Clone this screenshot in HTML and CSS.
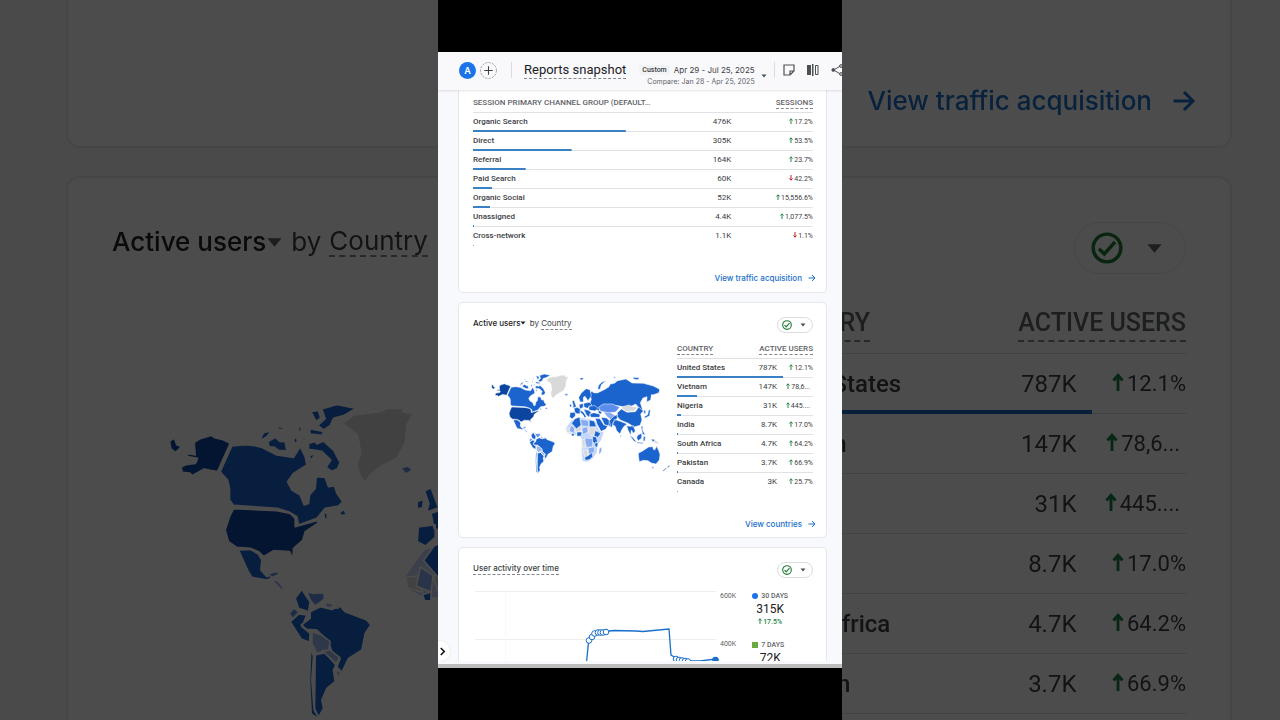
FILE: index.html
```html
<!DOCTYPE html>
<html lang="en">
<head>
<meta charset="utf-8">
<title>Reports snapshot</title>
<link rel="stylesheet" href="styles.css">
</head>
<body>
<svg class="defs" aria-hidden="true">
  <symbol id="arrow" viewBox="0 0 16 16"><path d="M1 8h13M8 2l6 6-6 6" fill="none" stroke="currentColor" stroke-width="2"/></symbol>
  <symbol id="caret" viewBox="0 0 12 12"><path d="M1 3h10L6 9z" fill="currentColor"/></symbol>
  <symbol id="check" viewBox="0 0 24 24"><g fill="none" stroke="#1e7b34" stroke-width="2.6"><circle cx="12" cy="12" r="10.4"/><path d="M6 12.500l4 4 8-9"/></g></symbol>
  <symbol id="up" viewBox="0 0 8 12"><path d="M4 12V2M1 5l3-3.500L7 5" fill="none" stroke="#188045" stroke-width="1.900"/></symbol>
  <symbol id="down" viewBox="0 0 8 12"><path d="M4 0v10M1 7l3 3.500L7 7" fill="none" stroke="#b3142c" stroke-width="1.900"/></symbol>
  <symbol id="world" viewBox="0 0 600 375">
    <g transform="translate(-126 0) scale(.3157)" stroke="#fff" stroke-width="5" stroke-linejoin="round">
      <path fill="#0b459f" d="M582 248l18-12 32-10 14 8 20 4 24 12-38 85-22-4-18-4-15 8-22 12-6-8-22-2-5-15 14-8 30-4 6-15-34-6 8-8 19 4zM508 244l14-10 8 20 14 6-18 18-14-12zM700 446l130 6 40 8 15 15v25l65-18 5 6-40 27-7 25-28 25-2 33-10-23-48-3-30 18-15-15-25-10-40-3-25-17-10-35 13-40z"/>
      <path fill="#1b64ce" d="M695 258l40-4 25 2 25 6 15 8 30 15 50 7 20-32 15 30 5 25-40 25-18 25 13 25 25 15 12 30 13-5 3-25 17-20 3-35 27 2 10 28 18-2 7 22 18 25-13 13-40 7-25 30-55 20-5-25-25-15-35-10-130-9-12-16v-35l-6-25-22-25z"/>
      <path fill="#1b64ce" d="M778 242l12-24 24-6-14 18zM803 245l22-13 14 12 16 1 5 28-25-2-14-10-14 0zM925 250l20-6 5 8 20-9 30 27 20 38-8 18-16 8-18-12 14-22-27-26-40-6zM965 147l45-14 58 12-38 22-30 8-10 22-20 13-17-14 22-20zM932 155l22-4 8 22-14 12zM928 206l42 8-5 12-35-4zM820 196l20 4 26 10-28-2zM880 240l8-10 4 12-6 12zM895 200l8 0 0 14-8 0zM928 286l18-6-14 22zM815 186l18-4-6 8zM970 462l10-6 2 20-8 2zM1016 460l14-12 10 16-14 2zM900 178l12 0-2 8zM905 240l14-10-6 14z"/>
      <path fill="#1b64ce" d="M715 570l35-2 25 14 10 18-3 30 18 20 12-6 12-12 10 4-14 14-18 10-47-8-12-20zM885 715l20-28 12 20 13 18-5 30-30-10zM870 785l25-23 25 3-15 35 25 20-2 27-25-10zM930 755l30-15 35 8 24-10 16 17 65 25 12 15-17 25-10 50-40 25-20 42-15-17 10-25-25-20-10-30-35-35-30-2-17-13 27-20zM945 885l30-7 32 37-7 15 5 35-25 20-15 35 5 25-15 27-12-27zM932 860l8 30-5 70 7 90 18 30-27-18-5-102z"/>
      <path fill="#6794e8" d="M920 695l20 5 32-2 0 20-27 20-15-18zM866 760l16-16 14 12-18 20zM800 642l30-8 8 8-20 10zM1200 324l24-6 14 12-20 12z"/>
      <path fill="#9bb9f1" d="M935 815l30 10 25 20-5 25-35 10-15-30zM965 872l25-2 28 22-10 18zM1005 930l18 8-10 14zM812 658l22 5 18 22-10 4zM975 728l22 2 0 12-20 0zM1000 735l20 2-8 8z"/>
      <path fill="#d9d9da" d="M1028 190l32-25 80-10 20-10 30 0 24-2-8 12 34 6-20 34-5 55-25 45-50 25-30 25-15 23-17-23-8-35 12-30-10-55z"/>
    </g>
    <g stroke="#fff" stroke-width="1.500" stroke-linejoin="round">
      <path fill="#c3d6fa" d="M256 206l19-26 23-8 32 6 18 8 10 26 14 4-8 24-12 15v20l-13 20-18 12-14-4-3-34 2-30-8-14-21 1-16-8z"/>
      <path fill="#d9dadd" d="M284 205l18-9 4 18-18 4zM328 200l18 0 4 18-16 10-8-10zM308 270l16 0 0 18-8 8zM258 206l14-2 2 16-14-4zM304 240l12-2 0 24-8 2z"/>
      <path fill="#88acf2" d="M302 178l24 4v18l-22-3zM314 234l24 2 0 24-18 2-4-12zM272 196l12 8-2 16-14-6zM324 264l18-4 2 14-16 12zM306 204l16-4 2 16-16 8zM358 266l8-6-2 16-8 8zM370 155l20 2 16 10-12 14-14-12z"/>
      <path fill="#1b64ce" d="M275 190l10-14 14-5 4 25-14 10zM328 180l15 3 6 17-21 0zM291 216l15 0-3 12-12 1zM338 230l10 0 4 14-8 8-6-8zM346 212l16 8-8 12-12-4zM314 292l10-5 12-9 2 12-10 9-12 2zM274 222l8-2 0 8-6 0zM346 246l8 4-2 12-8-4z"/>
      <path fill="#1b64ce" d="M340 98l12 1 23-11 12-8 4-8 12-2 10-8 25-5 18 12 34 1 30 8 19 10-2 10-16 6-7 0-2 16-12 6 1-16-12 4-8 14 8 26-12-10-10-12-23 12-20-5-25-4-35 4-7 14-13-5-15-15 5-16-6-14 8-10zM353 88l3-12 10-10 12-4-14 12-4 14zM298 56l8-3 6 3-8 4zM400 50l8 2-4 3zM460 52l18 1-4 6-14-2z"/>
      <path fill="#1b64ce" d="M296 113l7-13 15-14 12 3 4 19-10 14-9-13-5 3 0 14-9 0zM270 158l16-2 0 12-9 8-8-4zM282 145l10-3 10 6-3 14-14-2zM276 124l6-3 7 19-11 4 2-8zM269 134l6-2-1 8-5 1zM297 134l12-4 1 12-10 5zM311 130l17-3 8 8-14 10-10-4zM326 138l18-1 11 8-10 8-18-3zM300 149l12 9 7 12-5 3-6-10-8-7zM311 148l15 3 8 7-7 14-8-8zM328 162l14-4 18 5-1 9-26 0zM355 151l10 4-2 8-8-4zM363 172l17 2 8 8 4 16-18-3zM346 175l14 1 11 18 12 4-6 10-14 6-12-22zM388 182l14-14 10-4 0 10-12 14-4 14-10-4zM412 158l12-11 18 10 24-2 10-14 14 12-8 9 4 18-6 16-18 5-17-11-24-10-9-10zM403 178l18 6 20 8-10 8-6 10-5 12-10-10-5-14-8-4zM440 197l10 2 10-2 6 16-6 7-6-10-2 16-8-16zM449 226l9 6 12 14-8-2zM473 226l12-6 0 14-10 8-5-8zM483 200l5-3 0 14 8 14-8-2zM470 246l20 2-1 3-18-2zM490 230l6-2-1 14-5 2zM491 150l6 2 0 8-5 1zM493 170l10-6 3-14 5-1-2 18-13 7zM422 224l3 5-4 1z"/>
      <path fill="#5a8dec" d="M356 141l14-9 28 0 21 10-12 14-22 2-24-5z"/>
      <path fill="#d5d8df" d="M423 143l12-5 12-3 12 5 14 1-11 12-24 2z"/>
      <path fill="#1b64ce" d="M475 280l14-8 17-11 12-1 2 8 4 2 6-11 7 15 3 10-2 16-10 12-14-3-10-7-14-1-12 4-2-12zM515 320l7 1-3 5zM513 238l8 0 6 5-8 2z"/>
      <path fill="#d4d6dc" d="M523 241l13 6 0 4-15-3z"/>
      <path fill="#7e9ac8" stroke="none" d="M548 332l10-9 2 2-9 9zM563 319l6-3-1 5-6 2z"/>
    </g>
  </symbol>
</svg>

<div class="stage">
  <div class="backdrop" aria-hidden="true">
    <section class="big-card big-first">
      <span class="big-link">View traffic acquisition <svg class="big-arrow"><use href="#arrow"/></svg></span>
    </section>
    <section class="big-card big-second">
      <div class="big-head">
        <div class="big-title"><span class="strong">Active users</span><svg class="big-caret"><use href="#caret"/></svg> by <span class="dashed">Country</span></div>
        <div class="big-pill"><svg class="big-check"><use href="#check"/></svg><svg class="big-caret"><use href="#caret"/></svg></div>
      </div>
      <div class="big-body">
        <svg class="big-map"><use href="#world"/></svg>
        <table class="big-table">
          <thead><tr><th><span class="dashed">COUNTRY</span></th><th colspan="2"><span class="dashed">ACTIVE USERS</span></th></tr></thead>
          <tbody>
            <tr style="--bar:78%"><td>United States</td><td>787K</td><td><svg class="trend"><use href="#up"/></svg>12.1%</td></tr>
            <tr style="--bar:15%"><td>Vietnam</td><td>147K</td><td class="cut"><svg class="trend"><use href="#up"/></svg>78,6...</td></tr>
            <tr style="--bar:3%"><td>Nigeria</td><td>31K</td><td class="cut"><svg class="trend"><use href="#up"/></svg>445....</td></tr>
            <tr style="--bar:1%"><td>India</td><td>8.7K</td><td><svg class="trend"><use href="#up"/></svg>17.0%</td></tr>
            <tr style="--bar:1%"><td>South Africa</td><td>4.7K</td><td><svg class="trend"><use href="#up"/></svg>64.2%</td></tr>
            <tr style="--bar:1%"><td>Pakistan</td><td>3.7K</td><td><svg class="trend"><use href="#up"/></svg>66.9%</td></tr>
          </tbody>
        </table>
      </div>
    </section>
  </div>

  <div class="frame">
    <div class="screen">
      <header class="topbar">
        <button class="avatar">A</button>
        <button class="add" aria-label="Add comparison"><svg viewBox="0 0 16 16"><circle cx="8" cy="8" r="7.500" fill="none" stroke="#8b8f94" stroke-width=".8" stroke-dasharray="2 1.200"/><path d="M8 4v8M4 8h8" stroke="#3c4043" stroke-width="1"/></svg></button>
        <span class="rule"></span>
        <h1>Reports snapshot</h1>
        <button class="dates">
          <span class="date-text">
            <span class="date-main"><span class="chip">Custom</span>Apr 29 - Jul 25, 2025</span>
            <span class="date-compare">Compare: Jan 28 - Apr 25, 2025</span>
          </span>
          <svg class="caret"><use href="#caret"/></svg>
        </button>
        <span class="rule"></span>
        <div class="tools">
          <button aria-label="Notes"><svg viewBox="0 0 12 12" fill="none" stroke="#4c5054" stroke-width="1.200"><path d="M1 1h10v6l-4 4H1zM11 7H7v4"/></svg></button>
          <button aria-label="Compare"><svg viewBox="0 0 12 12"><path fill="#4c5054" d="M0 1h4v10H0zM5 0h1.500v12H5z"/><path d="M8.500 1.500H11v9H8.500z" fill="none" stroke="#4c5054"/></svg></button>
          <button aria-label="Share"><svg viewBox="0 0 12 12" stroke="#4c5054" fill="none"><path d="M2.500 6l7-4M2.500 6l7 4"/><circle cx="2.300" cy="6" r="1.400" fill="#4c5054"/><circle cx="10" cy="2" r="1.400"/><circle cx="10" cy="10" r="1.400"/></svg></button>
        </div>
      </header>

      <main class="content">
        <section class="card channels">
          <table class="report wide">
            <thead><tr><th colspan="2">SESSION PRIMARY CHANNEL GROUP (DEFAULT…</th><th><span class="dashed">SESSIONS</span></th></tr></thead>
            <tbody>
              <tr style="--bar:45%"><td>Organic Search</td><td>476K</td><td><svg class="trend"><use href="#up"/></svg>17.2%</td></tr>
              <tr style="--bar:29%"><td>Direct</td><td>305K</td><td><svg class="trend"><use href="#up"/></svg>53.5%</td></tr>
              <tr style="--bar:15.500%"><td>Referral</td><td>164K</td><td><svg class="trend"><use href="#up"/></svg>23.7%</td></tr>
              <tr style="--bar:5.700%"><td>Paid Search</td><td>60K</td><td><svg class="trend"><use href="#down"/></svg>42.2%</td></tr>
              <tr style="--bar:5%"><td>Organic Social</td><td>52K</td><td><svg class="trend"><use href="#up"/></svg>15,556.6%</td></tr>
              <tr style="--bar:1px"><td>Unassigned</td><td>4.4K</td><td><svg class="trend"><use href="#up"/></svg>1,077.5%</td></tr>
              <tr style="--bar:1px"><td>Cross-network</td><td>1.1K</td><td><svg class="trend"><use href="#down"/></svg>1.1%</td></tr>
            </tbody>
          </table>
          <a class="more" href="#traffic">View traffic acquisition <svg><use href="#arrow"/></svg></a>
        </section>

        <section class="card countries">
          <div class="card-head">
            <h2><button class="metric">Active users<svg><use href="#caret"/></svg></button> by <span class="dashed">Country</span></h2>
            <button class="pill" aria-label="Data quality"><svg class="check"><use href="#check"/></svg><svg class="caret"><use href="#caret"/></svg></button>
          </div>
          <div class="geo">
            <svg class="map" role="img" aria-label="World map of active users"><use href="#world"/></svg>
            <table class="report narrow">
              <thead><tr><th><span class="dashed">COUNTRY</span></th><th colspan="2"><span class="dashed">ACTIVE USERS</span></th></tr></thead>
              <tbody>
                <tr style="--bar:78%"><td>United States</td><td>787K</td><td><svg class="trend"><use href="#up"/></svg>12.1%</td></tr>
                <tr style="--bar:15%"><td>Vietnam</td><td>147K</td><td class="cut"><svg class="trend"><use href="#up"/></svg>78,6...</td></tr>
                <tr style="--bar:3%"><td>Nigeria</td><td>31K</td><td class="cut"><svg class="trend"><use href="#up"/></svg>445....</td></tr>
                <tr style="--bar:1px"><td>India</td><td>8.7K</td><td><svg class="trend"><use href="#up"/></svg>17.0%</td></tr>
                <tr style="--bar:1px"><td>South Africa</td><td>4.7K</td><td><svg class="trend"><use href="#up"/></svg>64.2%</td></tr>
                <tr style="--bar:1px"><td>Pakistan</td><td>3.7K</td><td><svg class="trend"><use href="#up"/></svg>66.9%</td></tr>
                <tr style="--bar:1px"><td>Canada</td><td>3K</td><td><svg class="trend"><use href="#up"/></svg>25.7%</td></tr>
              </tbody>
            </table>
          </div>
          <a class="more" href="#countries">View countries <svg><use href="#arrow"/></svg></a>
        </section>

        <section class="card">
          <div class="card-head">
            <h2 class="strong-title"><span class="dashed">User activity over time</span></h2>
            <button class="pill" aria-label="Data quality"><svg class="check"><use href="#check"/></svg><svg class="caret"><use href="#caret"/></svg></button>
          </div>
          <div class="activity">
            <svg class="chart" viewBox="473 586 246 80" role="img" aria-label="User activity line">
              <path d="M475 591.500h241M475 639.500h241" stroke="#eceef0" fill="none"/>
              <path d="M505.500 591v75" stroke="#f8f9fa" fill="none"/>
              <g fill="none" stroke="#1a6fc9" stroke-width="1.300">
                <path d="M586 668L588.500 642 592 637 595 633 605 631.500 614 630.500 636 631 643 631.500 669 629 671 655 676 658 688 661 700 661 716 659"/>
                <g fill="#fff" stroke-width="1"><circle cx="589" cy="640.500" r="2.800"/><circle cx="592" cy="637" r="2.800"/><circle cx="594.500" cy="633.500" r="2.800"/><circle cx="598" cy="632.500" r="2.800"/><circle cx="600.500" cy="632.500" r="2.800"/><circle cx="603" cy="632.500" r="2.800"/><circle cx="606" cy="632" r="2.800"/><circle cx="676" cy="659" r="2.800"/><circle cx="679" cy="660" r="2.800"/><circle cx="682" cy="660.500" r="2.800"/><circle cx="685" cy="661" r="2.800"/><circle cx="688" cy="661.500" r="2.800"/></g>
                <circle cx="715.500" cy="660" r="2.600" fill="#1a6fc9"/>
              </g>
            </svg>
            <div class="axis"><span>600K</span><span>400K</span></div>
            <dl class="legend">
              <div><dt><i class="dot"></i>30 DAYS</dt><dd>315K</dd><dd class="gain"><svg class="trend"><use href="#up"/></svg>17.5%</dd></div>
              <div><dt><i class="square"></i>7 DAYS</dt><dd>72K</dd></div>
            </dl>
          </div>
        </section>
      </main>
      <button class="drawer" aria-label="Open navigation"><svg viewBox="0 0 8 12"><path d="M2 2l4 4-4 4" fill="none" stroke="#111" stroke-width="1.800"/></svg></button>
    </div>
  </div>
</div>
</body>
</html>
```
FILE: styles.css
```css
* { box-sizing: border-box; }
body { margin: 0; background: #000; color: #3c4043; font-family: Roboto, "Liberation Sans", sans-serif; }
h1, h2, dl, dd { margin: 0; }
button { padding: 0; border: 0; background: none; color: inherit; font: inherit; }
svg { display: block; flex: none; }
table { border-collapse: collapse; table-layout: fixed; }
.defs { display: none; }
.dashed { border-bottom: 1px dashed #80868b; }

.stage { display: grid; height: 100vh; overflow: hidden; }
.stage > * { grid-area: 1 / 1; min-height: 0; }

/* Enlarged, dimmed copy behind the portrait frame */
.backdrop { display: flex; flex-direction: column; gap: 28px; padding: 0 48px 0 66px; overflow: hidden; background: #f6f6f8; filter: brightness(.3); }
.big-card { flex: none; border: 2px solid #e8e8eb; border-radius: 14px; background: #fff; padding: 0 44px; }
.big-first { display: flex; height: 148px; align-items: flex-end; justify-content: flex-end; border-top: 0; border-radius: 0 0 14px 14px; padding: 0 34px 29px 0; }
.big-link { display: flex; gap: 20px; align-items: center; color: #1a6fc9; font: 500 26px/32px Inter, sans-serif; }
.big-arrow { width: 24px; height: 24px; }
.big-second { padding-top: 44px; }
.big-head { display: flex; justify-content: space-between; align-items: flex-start; }
.big-title { display: flex; align-items: center; gap: 8px; padding-top: 4px; font: 400 26px/32px Inter, sans-serif; }
.big-title .strong { margin-right: -8px; color: #202124; font-weight: 500; }
.big-title .dashed { border-bottom-width: 2px; line-height: 28px; }
.big-caret { width: 17px; height: 17px; color: #5f6368; }
.big-pill { display: flex; align-items: center; justify-content: space-between; width: 112px; height: 52px; padding: 0 22px 0 16px; border: 1px solid #e6e7ea; border-radius: 26px; }
.big-check { width: 32px; height: 32px; }
.big-body { display: flex; justify-content: space-between; align-items: flex-start; padding: 32px 0 0 21px; }
.big-map { width: 634px; height: 396px; margin-top: 54px; margin-right: -30px; }
.big-table { width: 429px; font-size: 24px; line-height: 28px; }
.big-table th { height: 48px; padding: 0; text-align: right; vertical-align: top; font-size: 25px; font-weight: 500; color: #5f6368; line-height: 32px; white-space: nowrap; }
.big-table th:first-child, .big-table td:first-child { width: 210px; text-align: left; }
.big-table th .dashed { display: inline-block; border-width: 2px; line-height: 34px; }
.big-table td { height: 60px; padding: 0; text-align: right; white-space: nowrap; }
.big-table td:first-child { font-weight: 500; }
.big-table td:nth-child(2) { width: 108px; }
.big-table td:nth-child(3) { font-size: 22px; }
.big-table td.cut { padding-right: 6px; }
.big-table tbody tr { background: linear-gradient(#1a66c0, #1a66c0) 0 100% / var(--bar) 4px no-repeat, linear-gradient(#dadce0, #dadce0) 0 100% / 100% 1px no-repeat; }
.big-table thead tr { background: linear-gradient(#dadce0, #dadce0) 0 100% / 100% 1px no-repeat; }
.big-table .trend { width: 12px; height: 18px; margin-right: 3px; }

/* Portrait frame */
.frame { z-index: 1; justify-self: center; width: 100%; max-width: 404px; padding: 52px 0; background: #000; }
.screen { position: relative; display: flex; flex-direction: column; height: 100%; overflow: hidden; background: #f8f9fc; border-bottom: 4px solid #bdbdbf; }
.topbar { display: flex; flex: none; align-items: center; height: 38px; padding: 0 0 2px 21px; background: #f9f9fc; box-shadow: 0 1px 2px rgba(60, 64, 67, .15); z-index: 1; }
.avatar { flex: none; width: 17px; height: 17px; border-radius: 50%; background: #1a73e8; color: #fff; font: 600 9px/17px Inter, sans-serif; }
.add { flex: none; margin: 0 14px 0 4px; }
.add svg { width: 17px; height: 17px; }
.rule { flex: none; width: 1px; height: 16px; background: #dadce0; }
h1 { margin: 0 13px 0 12px; border-bottom: 1px dashed #80868b; color: #202124; font: 400 13px/17px Roboto, sans-serif; white-space: nowrap; }
.dates { display: flex; flex: none; align-items: flex-end; gap: 6px; margin-right: 7px; padding-top: 12px; white-space: nowrap; }
.date-text { display: flex; flex-direction: column; align-items: flex-end; }
.date-main { display: flex; align-items: center; gap: 4px; font: 400 8px/12px Inter, sans-serif; }
.chip { padding: 0 3px; border-radius: 2px; background: #f1f3f4; font: 500 7px/10px Roboto, sans-serif; }
.date-compare { color: #5f6368; font: 400 7px/12px Inter, sans-serif; }
.caret { width: 6px; height: 6px; color: #4c5054; }
.dates .caret { margin-bottom: 9px; }
.tools { display: flex; gap: 12px; padding-left: 8px; }
.tools svg { width: 12px; height: 12px; }

.content { display: flex; flex: 1; flex-direction: column; gap: 9px; min-height: 0; margin-bottom: 3px; padding: 0 15px 0 20px; overflow: hidden; }
.card { flex: none; border: 1px solid #e6e7ec; border-radius: 5px; background: #fff; padding: 14px 13px 0 14px; }
.channels { height: 203px; border-top: 0; border-radius: 0 0 5px 5px; padding-top: 5px; }
.countries { height: 236px; }
.report { width: 100%; font-size: 7px; line-height: 10px; }
.report th { height: 18px; padding: 0 0 2px; color: #5f6368; font-size: 8px; font-weight: 500; text-align: right; white-space: nowrap; }
.report th:first-child, .report td:first-child { text-align: left; }
.report th .dashed { display: inline-block; line-height: 10px; }
.report td { height: 19px; padding: 0 0 1px; text-align: right; white-space: nowrap; }
.report td:first-child { font-size: 8px; font-weight: 500; }
.report td:nth-child(2) { font-size: 8px; }
.report thead tr { background: linear-gradient(#e0e2e5, #e0e2e5) 0 100% / 100% 1px no-repeat; }
.report tbody tr { background: linear-gradient(#3a80c4, #3a80c4) 0 100% / var(--bar) 2px no-repeat, linear-gradient(#e0e2e5, #e0e2e5) 0 100% / 100% 1px no-repeat; }
.report tbody tr:last-child { background: linear-gradient(#9aa0a6, #9aa0a6) 0 100% / 1px 1px no-repeat; }
.wide th:first-child { width: 76%; }
.narrow { width: 136px; }
.narrow th:first-child { width: 64px; }
.trend { display: inline-block; width: 4px; height: 6px; margin-right: 1px; }
.report .cut { padding-right: 3px; }
.more { display: flex; justify-content: flex-end; align-items: center; gap: 6px; margin: 26px -3px 0 0; color: #1a6fc9; font: 500 8px/12px Inter, sans-serif; text-decoration: none; }
.more svg { width: 8px; height: 8px; }

.card-head { display: flex; justify-content: space-between; align-items: flex-start; }
h2 { color: #3c4043; font: 400 8px/12px Inter, sans-serif; }
h2 .dashed { display: inline-block; line-height: 11px; }
.metric { margin-right: 1px; color: #202124; font-weight: 500; }
.strong-title { font-weight: 500; }
.metric svg { display: inline-block; width: 6px; height: 6px; }
.pill { display: flex; align-items: center; justify-content: space-between; width: 36px; height: 16px; padding: 0 6px 0 4px; border: 1px solid #dadce0; border-radius: 8px; }
.check { width: 10px; height: 10px; }
.geo { display: flex; justify-content: space-between; padding: 8px 0 0 7px; }
.map { width: 200px; height: 125px; margin-top: 19px; margin-right: -4px; }

.activity { display: flex; padding-top: 8px; }
.chart { width: 246px; height: 80px; }
.axis { display: flex; flex-direction: column; gap: 38px; padding: 5px 0 0 1px; color: #5f6368; font-size: 7px; line-height: 10px; }
.legend { display: flex; flex-direction: column; gap: 13px; padding: 5px 0 0 16px; }
.legend div { display: flex; flex-direction: column; align-items: center; }
.legend dt { display: flex; align-items: center; gap: 3px; align-self: flex-start; color: #5f6368; font: 500 7px/10px Roboto, sans-serif; }
.legend dd { color: #202124; font-size: 12px; line-height: 16px; }
.legend .gain { color: #188045; font: 500 7px/10px Roboto, sans-serif; }
.dot, .square { width: 6px; height: 6px; background: #1a73e8; border-radius: 50%; }
.square { background: #6aa842; border-radius: 0; }
.drawer { position: absolute; left: -8px; bottom: 3px; width: 20px; height: 20px; padding-left: 9px; border-radius: 50%; background: #fff; box-shadow: 0 0 2px rgba(60, 64, 67, .15); }
.drawer svg { width: 7px; height: 11px; }
```
